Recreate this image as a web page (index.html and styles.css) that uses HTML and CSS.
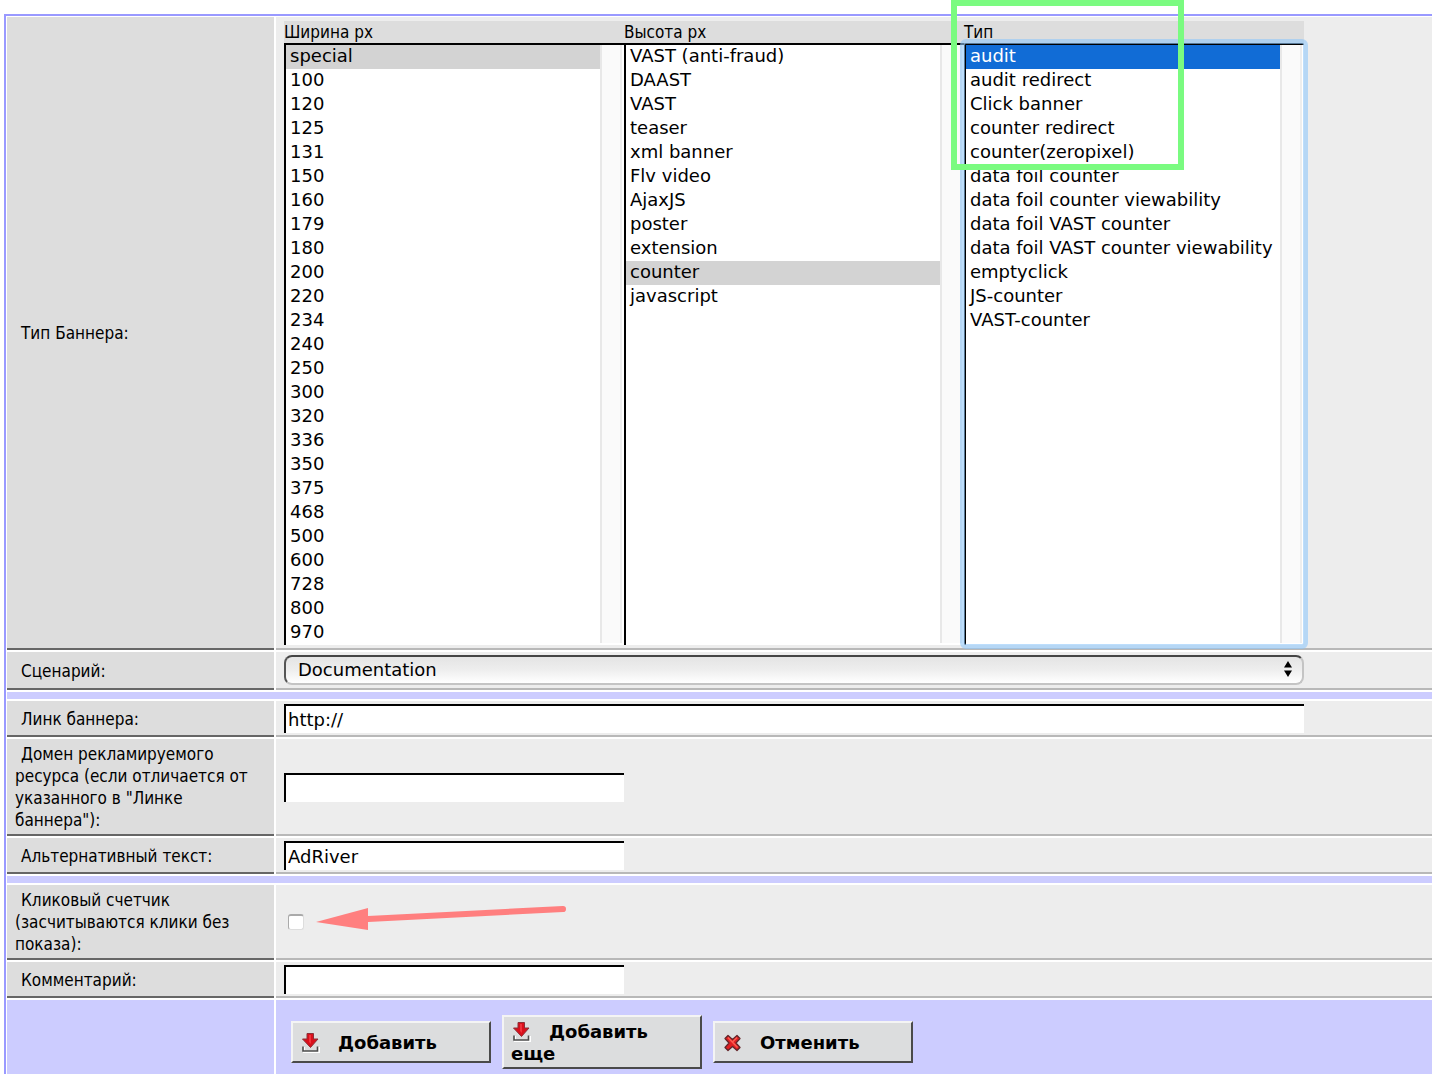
FILE: index.html
```html
<!DOCTYPE html>
<html lang="ru">
<head>
<meta charset="utf-8">
<title>Баннер</title>
<link rel="stylesheet" href="styles.css">
</head>
<body>
<svg class="sprite" aria-hidden="true">
  <symbol id="icon-add" viewBox="-1 0 20 20">
    <path d="M3 14v5h15v-5" fill="none" stroke="#fff" stroke-width="2"/>
    <path d="M2 13.500v4.500h14.500v-4.500" fill="none" stroke="#4c4c4c" stroke-width="1.600"/>
    <path d="M6 .5h6.500v5.500h4.500L9.500 14.500 1.500 6H6z" fill="#d9101c" stroke="#8c3038" stroke-width="1"/>
    <path d="M8 2h2v9L8 9z" fill="#f0323c"/>
  </symbol>
  <symbol id="icon-cancel" viewBox="-1 0 20 20">
    <path d="M2 5.500L5 2.500l4.500 4 4.500-4 3 3L13 10l4 4.500-3 3-4.500-4-4.500 4-3-3L6 10z" fill="#e01f22" stroke="#63262a" stroke-width="1.300" stroke-linejoin="round"/>
    <path d="M5 4.500l9.500 10M14 4.500L9.500 9" stroke="#ff5a50" stroke-width="1.500" fill="none"/>
  </symbol>
</svg>
<form class="form">
  <div class="row">
    <div class="label"><span>Тип Баннера:</span></div>
    <div class="field field-lists">
      <div class="lists">
        <div class="list">
          <label for="width">Ширина px</label>
          <select id="width" size="25">
            <option selected>special</option><option>100</option><option>120</option><option>125</option><option>131</option>
            <option>150</option><option>160</option><option>179</option><option>180</option><option>200</option>
            <option>220</option><option>234</option><option>240</option><option>250</option><option>300</option>
            <option>320</option><option>336</option><option>350</option><option>375</option><option>468</option>
            <option>500</option><option>600</option><option>728</option><option>800</option><option>970</option>
          </select>
        </div>
        <div class="list">
          <label for="height">Высота px</label>
          <select id="height" size="25">
            <option>VAST (anti-fraud)</option><option>DAAST</option><option>VAST</option><option>teaser</option>
            <option>xml banner</option><option>Flv video</option><option>AjaxJS</option><option>poster</option>
            <option>extension</option><option selected>counter</option><option>javascript</option>
          </select>
        </div>
        <div class="list list-active">
          <label for="type">Тип</label>
          <select id="type" size="25">
            <option selected>audit</option><option>audit redirect</option><option>Click banner</option>
            <option>counter redirect</option><option>counter(zeropixel)</option><option>data foil counter</option>
            <option>data foil counter viewability</option><option>data foil VAST counter</option>
            <option>data foil VAST counter viewability</option><option>emptyclick</option>
            <option>JS-counter</option><option>VAST-counter</option>
          </select>
          <div class="highlight"></div>
        </div>
      </div>
    </div>
  </div>
  <div class="row">
    <div class="label"><label for="scenario">Сценарий:</label></div>
    <div class="field">
      <div class="popup">
        <select id="scenario"><option>Documentation</option></select>
        <svg class="popup-arrows" viewBox="0 0 8 16" aria-hidden="true"><path d="M4 0l4 6.500H0zM4 16l4-6.500H0z"/></svg>
      </div>
    </div>
  </div>
  <div class="band"></div>
  <div class="row">
    <div class="label"><label for="link">Линк баннера:</label></div>
    <div class="field"><input class="text wide" id="link" type="text" value="http://"></div>
  </div>
  <div class="row">
    <div class="label"><label for="domain">Домен рекламируемого ресурса (если отличается от указанного в "Линке баннера"):</label></div>
    <div class="field"><input class="text" id="domain" type="text"></div>
  </div>
  <div class="row">
    <div class="label"><label for="alt">Альтернативный текст:</label></div>
    <div class="field"><input class="text" id="alt" type="text" value="AdRiver"></div>
  </div>
  <div class="band"></div>
  <div class="row">
    <div class="label"><label for="click">Кликовый счетчик (засчитываются клики без показа):</label></div>
    <div class="field">
      <input class="check" id="click" type="checkbox">
      <svg class="pointer" viewBox="0 0 252 26" aria-hidden="true">
        <path d="M52 14L247 4" fill="none" stroke="#ff7f7f" stroke-width="6" stroke-linecap="round"/>
        <path d="M0 17L52 3v22z" fill="#ff7f7f"/>
      </svg>
    </div>
  </div>
  <div class="row">
    <div class="label"><label for="comment">Комментарий:</label></div>
    <div class="field"><input class="text" id="comment" type="text"></div>
  </div>
  <div class="row row-actions">
    <div class="actions-side"></div>
    <div class="actions">
      <button type="button"><svg aria-hidden="true"><use href="#icon-add"/></svg>Добавить</button>
      <button type="button"><svg aria-hidden="true"><use href="#icon-add"/></svg>Добавить еще</button>
      <button type="button"><svg aria-hidden="true"><use href="#icon-cancel"/></svg>Отменить</button>
    </div>
  </div>
</form>
</body>
</html>
```
FILE: styles.css
```css
* { box-sizing: border-box; }

body {
  margin: 0;
  padding: 14px 0 0 4px;
  min-height: 100vh;
  display: flex;
  flex-direction: column;
  background: #fff;
  color: #000;
  font: 17px/22px "DejaVu Sans Condensed", "DejaVu Sans", sans-serif;
}

.sprite { display: none; }

.form {
  flex: 1;
  display: flex;
  flex-direction: column;
  gap: 2px;
  padding: 1px 0 0 1px;
  border-top: 2px solid #9999ff;
  border-left: 2px solid #9999ff;
}

.row {
  display: grid;
  grid-template-columns: 267px minmax(0, 1fr);
  gap: 2px;
}

.label {
  display: flex;
  align-items: center;
  padding: 4px 8px 3px;
  text-indent: 6px;
  background: #ddd;
  border-bottom: 2px solid #666;
}

.field {
  position: relative;
  display: flex;
  align-items: center;
  padding: 3px 8px 2px;
  background: #ededed;
  border-bottom: 2px solid #b8b8b8;
}

.band { height: 7px; background: #ccccff; }

.field-lists { padding: 4px 8px 3px; }

.lists {
  display: grid;
  grid-template-columns: repeat(3, 1fr);
  width: 100%;
  max-width: 1020px;
  background: #ddd;
}

.list {
  position: relative;
  display: flex;
  flex-direction: column;
}

select, input, button {
  margin: 0;
  color: #000;
  font: 18px/22px "DejaVu Sans", sans-serif;
}

.list select {
  height: 602px;
  padding: 0 24px 0 0;
  border: 0 solid #000;
  border-width: 2px 0 0 2px;
  border-radius: 0;
  overflow: hidden;
  background: linear-gradient(to right, #e8e8e8 2px, #fafafa 2px 20px, #eee 20px 22px, #fff 22px) right top / 24px 598px no-repeat #fff;
}

.list option {
  min-height: 24px;
  padding: 0 4px 3px;
}

.list option:checked { background: linear-gradient(#d3d3d3, #d3d3d3); color: #000; }

.list-active select {
  border-radius: 2px;
  outline: 5px solid rgba(145, 200, 250, 0.6);
  outline-offset: -1px;
}

.list-active option:checked { background: linear-gradient(#116cd6, #116cd6); color: #fff; }

.highlight {
  position: absolute;
  top: -21px;
  left: -13px;
  width: 233px;
  height: 170px;
  border: 6px solid #7afb80;
  pointer-events: none;
}

.popup {
  position: relative;
  width: 100%;
  max-width: 1020px;
  margin-bottom: 1px;
}

.popup select {
  display: block;
  appearance: none;
  width: 100%;
  height: 30px;
  padding: 0 12px;
  border: 2px solid #c4c4c4;
  border-top-color: #444;
  border-left-color: #555;
  border-radius: 8px;
  background: linear-gradient(#e4e4e4, #eee 50%, #fff);
}

.popup-arrows {
  position: absolute;
  top: 6px;
  right: 12px;
  width: 8px;
  height: 16px;
  pointer-events: none;
}

.text {
  width: 340px;
  height: 29px;
  padding: 0 2px;
  border: 0 solid #000;
  border-width: 2px 0 0 2px;
  border-radius: 0;
  background: #fff;
}

.wide { width: 100%; max-width: 1020px; }

.check {
  appearance: none;
  width: 16px;
  height: 16px;
  margin-left: 4px;
  border: 1px solid #ddd;
  border-top: 2px solid #aaa;
  border-left-color: #aaa;
  border-radius: 3px;
  background: #fff;
}

.pointer {
  position: absolute;
  top: 20px;
  left: 40px;
  width: 252px;
  height: 26px;
}

.row-actions { flex: 1; }

.actions-side, .actions { background: #ccccff; }

.actions {
  display: flex;
  align-items: center;
  align-content: flex-start;
  flex-wrap: wrap;
  gap: 11px;
  padding: 15px 15px 4px;
}

button {
  width: 200px;
  min-height: 42px;
  padding: 4px 7px 2px;
  border: 2px solid #4a4a4a;
  border-top-color: #f4f4f4;
  border-left-color: #f4f4f4;
  border-radius: 0;
  background: #dcddde;
  font-weight: bold;
  text-align: left;
}

button svg {
  width: 20px;
  height: 20px;
  margin-right: 18px;
  vertical-align: -4px;
}
```
